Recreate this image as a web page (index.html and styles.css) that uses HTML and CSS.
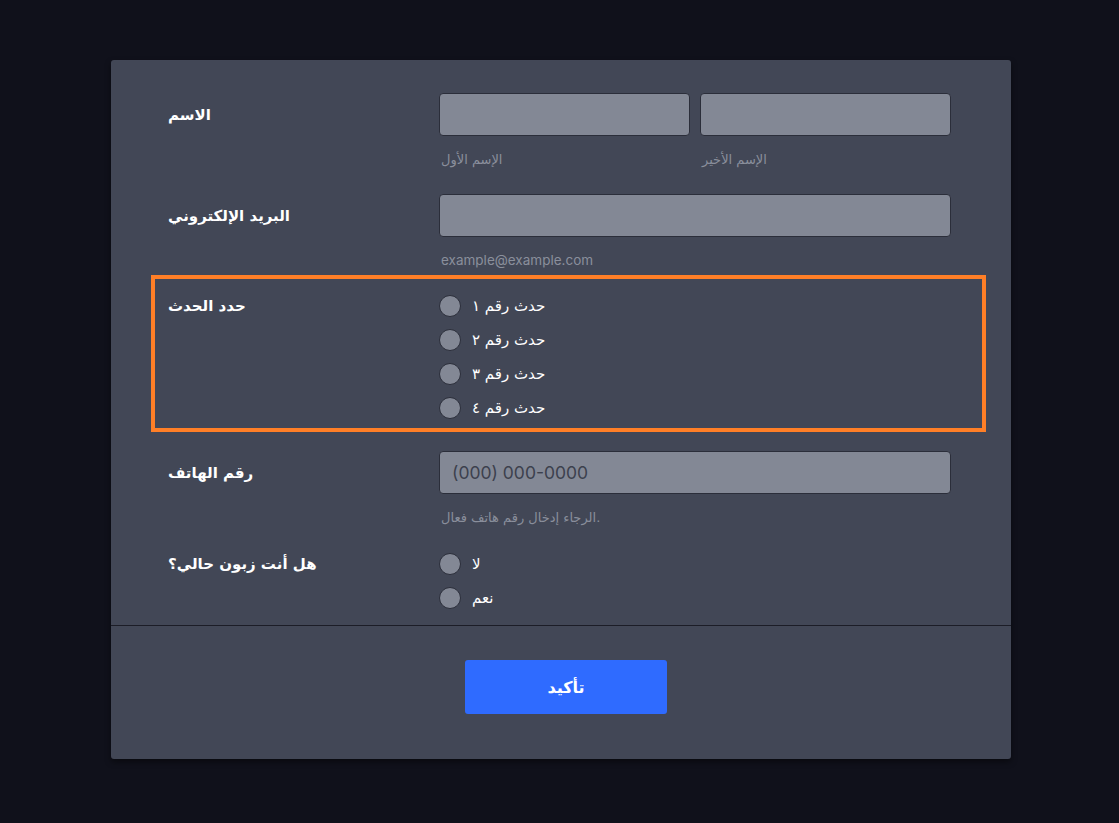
FILE: index.html
```html
<!DOCTYPE html>
<html lang="ar">
<head>
<meta charset="utf-8">
<title>Form</title>
<link rel="stylesheet" href="styles.css">
</head>
<body>
<form class="card">
  <ul class="rows">
    <li class="row">
      <div class="label">الاسم</div>
      <div class="field">
        <div class="pair">
          <div class="sub-field">
            <input class="input" type="text">
            <div class="sublabel">الإسم الأول</div>
          </div>
          <div class="sub-field">
            <input class="input" type="text">
            <div class="sublabel">الإسم الأخير</div>
          </div>
        </div>
      </div>
    </li>
    <li class="row">
      <div class="label">البريد الإلكتروني</div>
      <div class="field">
        <input class="input" type="email">
        <div class="sublabel latin">example@example.com</div>
      </div>
    </li>
    <li class="row row-active">
      <div class="label">حدد الحدث</div>
      <div class="field">
        <div class="radios">
          <label class="radio"><span class="dot"></span><span class="radio-text">حدث رقم ١</span></label>
          <label class="radio"><span class="dot"></span><span class="radio-text">حدث رقم ٢</span></label>
          <label class="radio"><span class="dot"></span><span class="radio-text">حدث رقم ٣</span></label>
          <label class="radio"><span class="dot"></span><span class="radio-text">حدث رقم ٤</span></label>
        </div>
      </div>
    </li>
    <li class="row row-phone">
      <div class="label">رقم الهاتف</div>
      <div class="field">
        <input class="input phone" type="tel" placeholder="(000) 000-0000">
        <div class="sublabel">الرجاء إدخال رقم هاتف فعال.</div>
      </div>
    </li>
    <li class="row row-last">
      <div class="label">هل أنت زبون حالي؟</div>
      <div class="field">
        <div class="radios">
          <label class="radio"><span class="dot"></span><span class="radio-text">لا</span></label>
          <label class="radio"><span class="dot"></span><span class="radio-text">نعم</span></label>
        </div>
      </div>
    </li>
  </ul>
  <div class="footer">
    <button class="submit" type="button">تأكيد</button>
  </div>
</form>
</body>
</html>
```

FILE: styles.css
```css
* { box-sizing: border-box; }
html, body { margin: 0; padding: 0; }
body {
  background: #10111b;
  font-family: Inter, "DejaVu Sans", sans-serif;
  color: #ffffff;
  width: 1119px;
  height: 823px;
  overflow: hidden;
}
.card {
  width: 900px;
  margin: 60px 0 0 111px;
  background: #424756;
  border-radius: 3px;
  box-shadow: 0 3px 6px rgba(0, 0, 0, 0.45);
}
.rows {
  list-style: none;
  margin: 0;
  padding: 13px 25px 10px 40px;
}
.row {
  display: flex;
  border: 4px solid transparent;
  padding: 16px 31px 3px 13px;
}
.row-phone {
  padding-top: 15px;
  padding-bottom: 4px;
}
.row-active {
  border-color: #ff7f27;
}
.label {
  width: 271px;
  flex: none;
  font-family: "DejaVu Sans", sans-serif;
  font-weight: bold;
  font-size: 15px;
  line-height: 20px;
  padding-top: 12px;
  color: #ffffff;
}
.row-active .label, .row-last .label { padding-top: 1px; }
.field {
  flex: 1;
  min-width: 0;
}
.pair {
  display: flex;
  gap: 10px;
}
.sub-field { flex: 1; min-width: 0; }
.input {
  display: block;
  width: 100%;
  height: 43px;
  margin: 0;
  background: #838895;
  border: 1px solid #2b2e3a;
  border-radius: 4px;
  padding: 0 12px;
  font-family: Inter, sans-serif;
  font-size: 17.5px;
  color: #2d303b;
  outline: none;
}
.phone::placeholder { color: #3c404d; }
.sublabel {
  margin-top: 17px;
  margin-left: 2px;
  font-family: "DejaVu Sans", sans-serif;
  font-size: 13px;
  line-height: 14px;
  color: #8a8f9c;
}
.sublabel.latin {
  font-family: Inter, sans-serif;
  font-size: 13.5px;
  margin-top: 15px;
  line-height: 16px;
}
.radios {
  display: flex;
  flex-direction: column;
  gap: 13px;
  margin-bottom: 7px;
}
.row-last .radios { margin-bottom: 0; }
.radio {
  display: flex;
  align-items: center;
  gap: 11px;
  height: 21px;
}
.dot {
  width: 22px;
  height: 22px;
  flex: none;
  border-radius: 50%;
  background: #838895;
  border: 1px solid #2b2e3a;
}
.radio-text {
  font-family: "DejaVu Sans", sans-serif;
  font-size: 15px;
  color: #ffffff;
}
.footer {
  border-top: 1px solid #1c1d27;
  padding: 34px 0 45px 10px;
  display: flex;
  justify-content: center;
}
.submit {
  width: 202px;
  height: 54px;
  background: #2f6bff;
  border: none;
  border-radius: 3px;
  color: #ffffff;
  font-family: "DejaVu Sans", sans-serif;
  font-weight: bold;
  font-size: 16px;
}
```
